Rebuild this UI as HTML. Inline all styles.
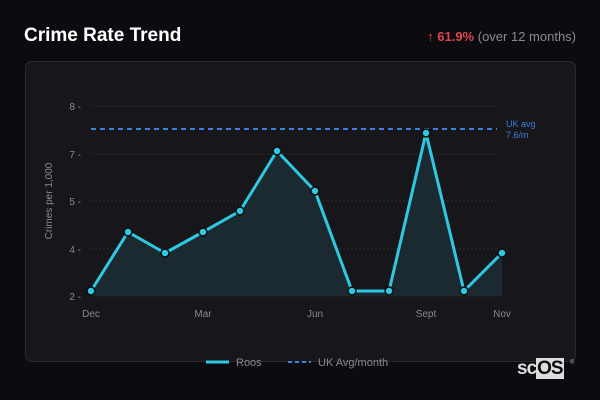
<!DOCTYPE html>
<html><head><style>
body{margin:0;width:600px;height:400px;background:#0c0b10;font-family:"Liberation Sans","DejaVu Sans",sans-serif;position:relative;overflow:hidden}
.t{position:absolute;left:24px;top:25px;color:#fff;font-weight:bold;font-size:19px}
.r{position:absolute;right:24px;top:29px;font-size:13px;color:#8a8a8e}
.r b{color:#e0454f}
.card{position:absolute;left:25px;top:61px;width:549px;height:299px;background:#17161a;border:1px solid #2a2a2e;border-radius:7px}
.logo{position:absolute;left:517px;top:358px;font-weight:bold;font-size:19px;color:#ddd;letter-spacing:-1px}
.logo span{background:#ddd;color:#0c0b10;padding:0 1px}
</style></head><body>
<div class="t">Crime Rate Trend</div>
<div class="r"><span style="color:#e0454f">↑</span> <b>61.9%</b> (over 12 months)</div>
<div class="card"></div>
<svg style="position:absolute;left:0;top:0" width="600" height="400" font-family="Liberation Sans, DejaVu Sans, sans-serif">
<g stroke="#2c2c30" stroke-dasharray="2,2">
<line x1="91" y1="106" x2="497" y2="106"/><line x1="91" y1="154" x2="497" y2="154"/><line x1="91" y1="201" x2="497" y2="201"/><line x1="91" y1="249" x2="497" y2="249"/><line x1="91" y1="296" x2="497" y2="296"/>
</g>
<g fill="#8a8a8e" font-size="10" text-anchor="end">
<text x="81" y="110">8 -</text><text x="81" y="158">7 -</text><text x="81" y="205">5 -</text><text x="81" y="253">4 -</text><text x="81" y="300">2 -</text>
</g>
<text x="52" y="201" fill="#8a8a8e" font-size="10" text-anchor="middle" transform="rotate(-90 52 201)">Crimes per 1,000</text>
<g fill="#8a8a8e" font-size="10" text-anchor="middle">
<text x="91" y="317">Dec</text><text x="203" y="317">Mar</text><text x="315" y="317">Jun</text><text x="426" y="317">Sept</text><text x="502" y="317">Nov</text>
</g>
<polygon fill="#1b2a30" points="91,296 91,291 128,232 165,253 203,232 240,211 277,151 315,191 352,291 389,291 426,133 464,291 502,253 502,296"/>
<line x1="91" y1="129" x2="497" y2="129" stroke="#3f7fe0" stroke-width="2" stroke-dasharray="5,4"/>
<text x="506" y="127" fill="#3f7fe0" font-size="9">UK avg</text><text x="506" y="138" fill="#3f7fe0" font-size="9">7.6/m</text>
<polyline fill="none" stroke="#2ec9e0" stroke-width="3" stroke-linejoin="round" points="91,291 128,232 165,253 203,232 240,211 277,151 315,191 352,291 389,291 426,133 464,291 502,253"/>
<g fill="#2ec9e0" stroke="#0c0b10" stroke-width="1.5">
<circle cx="91" cy="291" r="4"/><circle cx="128" cy="232" r="4"/><circle cx="165" cy="253" r="4"/><circle cx="203" cy="232" r="4"/><circle cx="240" cy="211" r="4"/><circle cx="277" cy="151" r="4"/><circle cx="315" cy="191" r="4"/><circle cx="352" cy="291" r="4"/><circle cx="389" cy="291" r="4"/><circle cx="426" cy="133" r="4"/><circle cx="464" cy="291" r="4"/><circle cx="502" cy="253" r="4"/>
</g>
<line x1="206" y1="362" x2="229" y2="362" stroke="#2ec9e0" stroke-width="3"/>
<text x="236" y="366" fill="#8a8a8e" font-size="11">Roos</text>
<line x1="288" y1="362" x2="311" y2="362" stroke="#3f7fe0" stroke-width="2" stroke-dasharray="4,3"/>
<text x="318" y="366" fill="#8a8a8e" font-size="11">UK Avg/month</text>
<text x="570" y="364" fill="#aaa" font-size="6">®</text>
</svg>
<div class="logo">sc<span>OS</span></div>
</body></html>
